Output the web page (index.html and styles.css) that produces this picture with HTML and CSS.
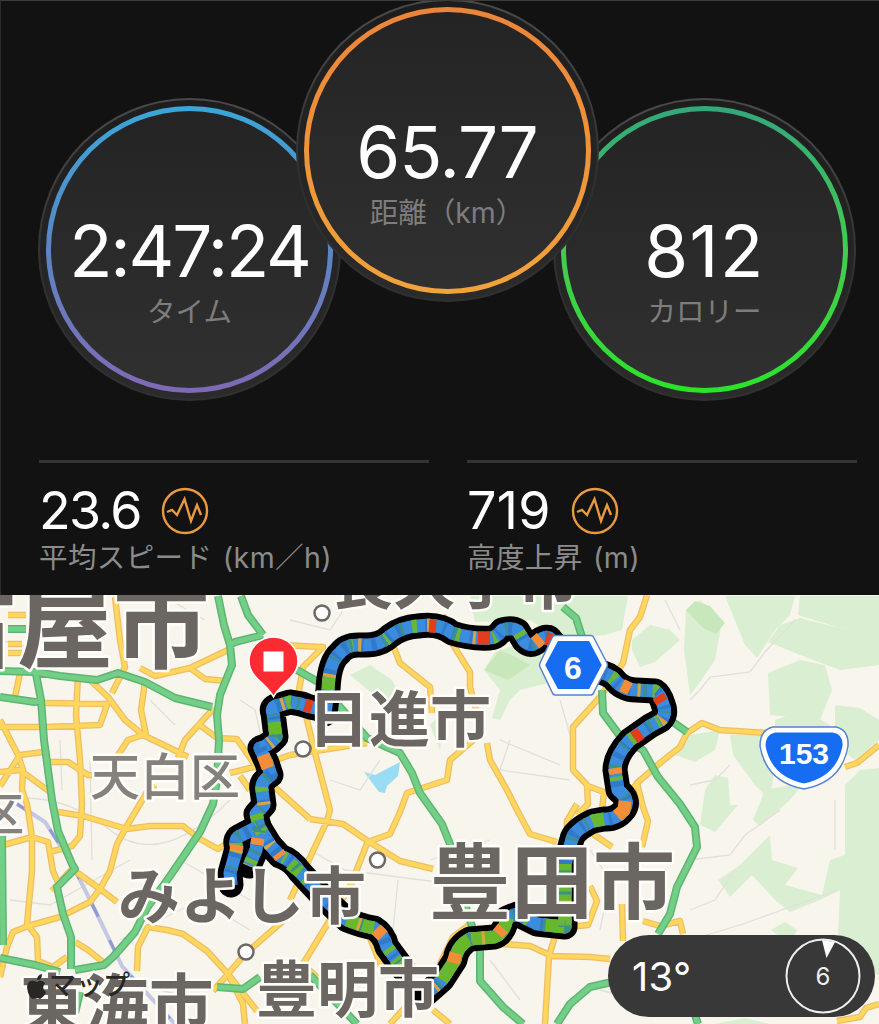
FILE: index.html
```
<!DOCTYPE html>
<html lang="ja">
<head>
    <meta charset="UTF-8">
    <meta name="viewport" content="width=device-width, initial-scale=1.0">
    <title>アクティビティ</title>
    <link rel="stylesheet" href="styles.css">
</head>
<body>
    <div class="activity">
        <!-- サマリー -->
        <section class="summary">
            <div class="dials">
                <div class="dial dial-time">
                    <div class="ring">
                        <span class="dial-value">2:47:24</span>
                        <span class="dial-label">タイム</span>
                    </div>
                </div>
                <div class="dial dial-distance">
                    <div class="ring">
                        <span class="dial-value">65.77</span>
                        <span class="dial-label">距離（km）</span>
                    </div>
                </div>
                <div class="dial dial-calories">
                    <div class="ring">
                        <span class="dial-value">812</span>
                        <span class="dial-label">カロリー</span>
                    </div>
                </div>
            </div>

            <div class="stats">
                <div class="stat">
                    <div class="stat-row">
                        <span class="stat-value speed">23.6</span>
                        <svg class="stat-icon" viewBox="0 0 48 48">
                            <circle cx="24" cy="24" r="22"/>
                            <path d="M6 25 L11 23 L16 28 L23.5 12 L30 34 L36 18 L40 28"/>
                        </svg>
                    </div>
                    <div class="stat-label">平均スピード (km／h)</div>
                </div>
                <div class="stat">
                    <div class="stat-row">
                        <span class="stat-value">719</span>
                        <svg class="stat-icon" viewBox="0 0 48 48">
                            <circle cx="24" cy="24" r="22"/>
                            <path d="M6 25 L11 23 L16 28 L23.5 12 L30 34 L36 18 L40 28"/>
                        </svg>
                    </div>
                    <div class="stat-label">高度上昇 (m)</div>
                </div>
            </div>
        </section>

        <!-- 地図 -->
        <section class="map">
            <svg class="map-canvas" viewBox="0 595 879 429">
                <defs>
                    <path id="yellow" d="M115 597 L120 640 L125 667 L112 693
                        M0 727 H45 L100 725 L108 702 M45 703 L108 704
                        M78 675 L76 715 L80 760 L82 804 L80 836 L72 846 L50 852
                        M90 680 L108 697 L125 720 L143 735 L178 752 L188 757
                        M145 682 L141 710 L146 735 M143 735 L128 740 L118 755
                        M140 668 L155 676 L190 668 L228 650 M190 668 L205 679 L226 681
                        M214 708 L185 740 L178 758 M197 723 L217 738 L237 739 L255 765 L270 783 L310 819
                        M230 773 L262 765 L290 755 M240 776 L250 790 M290 755 L367 743
                        M0 720 L18 755 L23 770 L22 790 L27 804 L32 837 L32 871 L27 924 L37 937 L38 961 L53 967 L67 957
                        M0 772 L20 770 L50 792 M0 786 L20 755 L43 752 M50 762 L68 762 L88 775 L108 776
                        M20 673 L15 697 M8 615 H26 M8 644 H22 M8 653 H22
                        M0 846 L32 837 L48 842 L53 871 L60 887
                        M0 977 L7 947 L13 932 L28 926 L60 917 L90 902 L100 889 L110 871 L117 844 L128 824 L147 792 L155 785
                        M58 812 L83 816 L127 829 L150 826 L183 826 L200 839 L218 849 L228 843
                        M52 891 L72 869 L100 889 L117 902 M75 942 L88 950 L103 962
                        M137 971 L138 947 L148 927 L167 930 L183 934 L207 951 L228 974 L243 1004 L245 1024
                        M283 921 L245 954 L228 974 L213 991 M228 974 L257 1011
                        M280 645 L323 647 L303 667 L299 690 L307 720 L315 753 L330 810 L327 821 L307 864 L290 900
                        M388 633 L400 663 L430 687 L432 713 M443 615 L450 640 L470 672 L470 687 L477 713
                        M477 737 L450 760 L447 780 L407 793 L400 812 L390 834 L368 842
                        M487 743 L490 760 L507 790 L517 810 L530 834 L557 842 M310 819 L343 824 L368 841 L400 861 L433 869
                        M368 841 L350 887 L303 964 L320 980 M577 804 L567 821 L567 838
                        M440 964 L453 937 L470 924 M503 944 L530 946 L552 956 L590 957 L610 959
                        M557 930 L549 956 L545 1024 M570 927 L588 925 L597 901 L590 886
                        M433 1010 L450 1024 M390 1024 L412 1000 M367 930 L383 971
                        M647 595 L640 617 L630 630 L623 663 L600 697 L573 727 L573 770 L587 785 L588 804 L577 815
                        M585 785 L604 792 L602 810 M687 733 L702 723 L720 730 L767 733 M845 767 L857 763 L879 745
                        M687 733 L680 747 L660 763 L637 783 L643 807 L648 821 L642 847 M637 783 L629 795
                        M593 834 L612 847 M622 904 L623 941 M643 921 L660 926 L680 921 L683 934 M837 1021 L860 1017 L866 1008 L879 1004"/>
                    <path id="green" d="M0 671 L35 672 L60 676 L97 680 L118 673 L145 682 L175 698 L212 707
                        M0 697 L35 702 L42 700 M36 674 L41 700 L44 740 L52 800 L58 831 L72 864 L75 869 L57 887 L63 914 L71 937 L71 969
                        M218 596 L224 625 L230 645 L232 665 L220 695 L217 715 L219 740 L217 780 L213 804 L200 832 L170 876 L147 908 L135 932 L113 957 L104 965 L75 970
                        M241 596 L248 615 L263 635 M263 635 L235 642 L229 646 M8 629 H26
                        M0 958 L35 965 L60 972 M2 835 L3 945
                        M563 607 L576 618 L583 640 M602 690 L603 713 L623 740 L643 750 L658 777 L680 804 L695 827 L697 847 L677 887 L670 914 L658 934
                        M670 720 L687 732 M297 670 L320 683 L340 707 L367 738 L400 753 L412 773 L420 793 L442 824 L450 844 L467 911 L480 951 L480 981 L503 1007 L523 1024
                        M557 1024 L570 1004 L590 987 L612 982 M217 987 L243 989 L260 977 M310 975 L357 1024 M80 992 L75 1013 M695 1015 L698 1024"/>
                    <path id="route-main" d="M325 714 L328 690 Q329 662 340 653 Q346 644 362 645 Q380 646 390 636 Q402 627 418 626 Q440 623 452 633 Q470 639 490 638 Q496 638 502 630 Q512 627 518 631 L524 641 Q531 648 538 641 Q548 634 551 640 L565 655 L590 671 Q604 671 613 678 Q622 690 636 690 L655 691 Q660 694 663 704 Q667 714 661 720 L650 726 L630 740 Q615 756 615 770 L618 790 Q631 800 624 810 Q616 820 604 819 L593 821 Q574 830 572 839 L565 864 V927 L537 924 L517 914 L507 918 Q504 934 494 937 L470 939 Q457 946 455 960 L442 980 L425 995"/>
                    <path id="route-west" d="M320 709 L310 707 Q300 703 290 702 L280 705 Q270 706 273 713 L276 737 Q268 746 260 748 L267 763 L271 775 Q260 782 262 790 L264 805 L256 814 L259 827 L270 845 L280 856 Q292 860 300 872 L327 901 L347 920 Q362 926 374 928 Q384 934 387 947 L404 970"/>
                    <path id="route-spur" d="M259 826 L242 835 Q233 838 237 848 L230 873 L231 885 M259 830 L256 850 L249 866"/>
                </defs>

                <!-- 緑地・水域 -->
                <path class="park" d="M470 596 H628 L622 630 L605 635 L560 640 L530 620 L475 622 Z
                    M484 670 L495 652 L515 645 L545 650 L560 680 L520 690 L510 700 L500 720 L492 718 L500 690 Z
                    M350 675 L370 665 L392 680 L405 705 L380 700 Z M632 640 L650 625 L670 630 L680 640 L655 662 L640 667 L632 650 Z
                    M686 610 L700 600 L722 620 L715 660 L698 685 L690 695 L684 650 Z
                    M725 596 H795 L790 615 L775 630 L757 658 L745 645 Z M800 596 H879 V622 L840 628 L798 615 Z
                    M780 625 L800 618 L840 628 L879 622 V665 L840 670 L800 655 L768 642 Z
                    M768 673 L800 660 L825 665 L832 690 L820 720 L770 715 Z M775 720 L805 710 L830 725 L825 740 H775 Z
                    M835 705 L860 708 L879 720 V740 L855 760 L835 745 Z M675 755 L690 735 L720 730 L715 750 L695 762 Z
                    M730 735 L765 735 L775 765 L770 800 L755 785 L733 755 Z M705 790 L715 775 L728 778 L730 805 H738 L715 832 L700 825 Z
                    M765 790 L805 782 L790 800 L760 826 L753 820 Z M845 785 L860 770 L879 768 V975 L850 965 L838 935 L840 890 L820 900 L790 912 L775 900 L752 875 L730 897 L718 880 L740 865 L770 835 L772 860 L798 868 L785 885 L822 895 L830 860 L845 855 Z
                    M771 930 L785 922 L797 930 L790 945 Z M715 1024 L745 1018 L770 1024 Z M430 725 L445 710 L440 750 Z"/>
                <path class="park-deep" d="M686 610 L695 601 L710 606 L725 623 L716 634 L703 628 Z M484 670 L500 650 L512 655 L530 665 L508 680 Z"/>
                <path class="water" d="M364 772 L375 775 L400 762 L398 776 L387 786 L385 793 L379 792 Z"/>

                <!-- 細い道路 -->
                <path class="minor" d="M0 800 Q60 790 110 830 T230 800 M10 900 L50 905 L130 860 M90 760 L92 860 M0 640 L40 650 M150 620 L170 600 L205 620 M150 700 L175 725 M240 700 L255 710 L262 740
                    M290 620 L330 630 L350 600 M330 780 L360 790 L380 760 M310 850 L345 870 L460 885 M398 880 L390 960 M430 860 L490 840 M500 740 L560 765 M510 740 L500 770 L570 780 M560 700 L570 735
                    M690 700 L700 690 L710 677 L750 672 L765 652 L795 620 M665 600 L680 630 M690 860 L730 855 L745 835 L780 810 M835 800 L835 850 M690 910 L715 900 L735 870 M690 940 L740 925 L838 890 M590 850 L610 880 L600 930 M490 960 L520 1000 M600 990 L680 1010 M120 940 L200 900 L250 930 M160 990 L200 1000 M180 860 L250 900 M60 740 L62 790 M690 785 L715 780 L730 765"/>
                <path class="rail" d="M17 804 L45 822 L72 864 L95 910 L122 966 L175 1024"/>
                <path class="rail-dash" d="M17 804 L45 822 L72 864 L95 910 L122 966 L175 1024"/>

                <!-- 幹線道路 -->
                <use href="#yellow" class="road yellow-edge"/>
                <use href="#yellow" class="road yellow-fill"/>
                <use href="#green" class="road green-edge"/>
                <use href="#green" class="road green-fill"/>

                <!-- 走行ルート -->
                <g class="route">
                    <g class="route-edge"><use href="#route-main"/><use href="#route-west"/><use href="#route-spur"/></g>
                    <g class="route-blue"><use href="#route-main"/><use href="#route-west"/><use href="#route-spur"/></g>
                    <g class="route-deep"><use href="#route-main"/><use href="#route-west"/><use href="#route-spur"/></g>
                    <path class="seg green" d="M604 819 L593 821 M565 864 V927 L545 925 M507 918 Q504 934 494 937 L470 939 Q457 946 455 960 L442 980 M290 864 L300 872 M347 920 Q362 926 374 928 M395 959 L404 970 M274 722 L276 737 M328 690 L329 677 M256 814 L258 820"/>
                    <g class="route-green"><use href="#route-main"/><use href="#route-west"/><use href="#route-spur"/></g>
                    <g class="route-teal"><use href="#route-main"/><use href="#route-west"/><use href="#route-spur"/></g>
                    <g class="route-orange"><use href="#route-main"/><use href="#route-west"/><use href="#route-spur"/></g>
                    <path class="seg red" d="M429 626 L436 626.500 M478 638 L490 638 M546 638 L551 640 M658 696 L662 702 M641 733 L634 738 M305 705 L312 707"/>
                    <path class="seg orange" d="M535 643 L541 638 M622 685 L630 689 M615 768 L616 774 M263 755 L268 768 M503 928 L498 934 M456 953 L453 963 M376 929 L383 936 M625 801 L624 810 L617 816 M237 845 L236 850 M278 853 L281 857 M258 838 L257 845"/>
                </g>

                <!-- 駅 -->
                <g class="station">
                    <circle cx="322" cy="613" r="7.500"/>
                    <circle cx="303" cy="749" r="7.500"/>
                    <circle cx="377.500" cy="860" r="7.500"/>
                    <circle cx="246" cy="952" r="7.500"/>
                </g>

                <!-- 地名 -->
                <g class="place">
                    <text x="-80" y="660" font-size="96.500">古屋市</text>
                    <text x="331" y="604" font-size="62">長久手市</text>
                    <text x="308" y="742" font-size="61">日進市</text>
                    <text x="118" y="919" font-size="62">みよし市</text>
                    <text x="429" y="912" font-size="82">豊田市</text>
                    <text x="256" y="1012" font-size="61">豊明市</text>
                    <text x="20" y="1028" font-size="64.500">東海市</text>
                </g>
                <g class="place ward">
                    <text x="90" y="795" font-size="50">天白区</text>
                    <text x="-22" y="831" font-size="46">区</text>
                </g>

                <!-- 国道・県道 -->
                <path class="shield-line" d="M555 635.500 H591 Q593 635.500 594 638 L607 663 Q608 665 607 667 L594 692 Q593 695 591 695 H555 Q553 695 552 692 L540 667 Q539 665 540 663 L552 638 Q553 635.500 555 635.500 Z"/>
                <path class="shield" d="M557 639.500 H590 L603.500 665 L590 690.500 H557 L543.500 665 Z"/>
                <text class="shield-text" x="573" y="679" font-size="32">6</text>
                <path class="shield-line" d="M773 727 H836 Q849 730 848 746 Q842 782 804 789 Q766 782 760 746 Q760 730 773 727 Z"/>
                <path class="shield" d="M775 731 H833 Q845 733 844 746 Q838 778 804 785 Q770 778 764 746 Q764 733 775 731 Z"/>
                <text class="shield-text" x="804" y="764" font-size="30">153</text>

                <!-- ゴールピン -->
                <path class="pin" d="M273.500 697 C267 683 249 678 249 661 A24.500 24 0 0 1 298 661 C298 678 280 683 273.500 697 Z"/>
                <rect x="263.500" y="651.500" width="20" height="20" fill="#fff"/>

                <!-- マップ表記 -->
                <path class="logo" d="M42 974 Q37 975 37 980 Q42 980 42 974 M37 982 Q28 978 27 987 Q28 997 33 999 Q36 997 40 999 Q45 996 46 992 Q41 989 45 983 Q41 979 37 982 Z"/>
                <text class="credit" x="49" y="995" font-size="27">マップ</text>
            </svg>

            <div class="weather">
                <span class="temp">13°</span>
                <svg class="wind" viewBox="0 0 76 76">
                    <circle cx="38" cy="38" r="36.500"/>
                    <path d="M37 2 L50 4 L41.500 20 Z"/>
                    <text x="38" y="46.500">6</text>
                </svg>
            </div>
        </section>
    </div>
</body>
</html>
```
FILE: styles.css
```
* {
    margin: 0;
    padding: 0;
    box-sizing: border-box;
}

body {
    width: 879px;
    height: 1024px;
    overflow: hidden;
    background: #121212;
    color: #fff;
    font-family: Inter, "Noto Sans CJK JP", sans-serif;
}

.activity {
    display: flex;
    flex-direction: column;
    height: 1024px;
}

/* サマリー */
.summary {
    height: 595px;
    border-top: 1px solid #3a3b3b;
    border-left: 1px solid #2d2d2d;
    padding: 0 21px 0 37px;
    overflow: hidden;
}

.dials {
    display: flex;
    align-items: flex-end;
    height: 400px;
}

.dial {
    flex: none;
    width: 303px;
    height: 303px;
    padding: 6px;
    border-radius: 50%;
    border: 2px solid transparent;
    background: linear-gradient(#1d1d1e, #2b2b2c) padding-box, linear-gradient(#4c4949, #303031 60%) border-box;
}

.dial-distance {
    z-index: 1;
    align-self: flex-start;
    margin: -2px -45.5px 0;
}

.ring {
    display: flex;
    flex-direction: column;
    align-items: center;
    height: 287px;
    padding-top: 102px;
    border: 5px solid transparent;
    border-radius: 50%;
}

.dial-time .ring {
    background: linear-gradient(#242424, #303030) padding-box, linear-gradient(#3ba6d8, #5b86c4 50%, #8069b4) border-box;
}

.dial-distance .ring {
    background: linear-gradient(#242424, #303030) padding-box, linear-gradient(#ec8439, #f2a33a) border-box;
}

.dial-calories .ring {
    background: linear-gradient(#242424, #303030) padding-box, linear-gradient(#34a77c, #45cb50 50%, #2be32a) border-box;
}

.dial-value {
    font-size: 71px;
    line-height: 76px;
    letter-spacing: -1px;
    white-space: nowrap;
}

.dial-time .dial-value {
    letter-spacing: -2.2px;
}

.dial-calories .dial-value {
    letter-spacing: 1.5px;
}

.dial-label {
    margin-top: 2px;
    font-size: 28.5px;
    line-height: 42px;
    color: #7d7d7d;
    white-space: nowrap;
}

/* 平均スピード・高度上昇 */
.stats {
    display: grid;
    grid-template-columns: 390px 390px;
    gap: 38px;
    margin: 59px 0 0 1px;
}

.stat {
    border-top: 3px solid #343434;
    padding-top: 22px;
}

.stat-row {
    display: flex;
    align-items: center;
    gap: 20px;
    height: 52px;
}

.stat-value {
    font-size: 52px;
    line-height: 52px;
    letter-spacing: 0.3px;
}

.stat-value.speed {
    letter-spacing: -1.7px;
}

.stat-icon {
    width: 48px;
    height: 48px;
    fill: none;
    stroke: #e99a3e;
    stroke-width: 2.4;
}

.stat-label {
    font-size: 28.5px;
    line-height: 42px;
    letter-spacing: 0.4px;
    word-spacing: 2px;
    color: #8b8b8b;
    white-space: nowrap;
}

/* 地図 */
.map {
    position: relative;
    height: 429px;
    background: #f8f5ed;
}

.map-canvas {
    display: block;
    width: 879px;
    height: 429px;
    font-family: "Noto Sans CJK JP", sans-serif;
}

.park { fill: #daefd1; }
.park-deep { fill: #c8e7ba; }
.water { fill: #9bdcf5; }

.minor {
    fill: none;
    stroke: #e2dfdb;
    stroke-width: 1.3;
}

.rail {
    fill: none;
    stroke: #c4c8e4;
    stroke-width: 4;
}

.rail-dash {
    fill: none;
    stroke: #8e9ad0;
    stroke-width: 3;
    stroke-dasharray: 16 26;
}

.road {
    fill: none;
    stroke-linejoin: round;
}

.yellow-edge { stroke: #efbd67; stroke-width: 6.5; }
.yellow-fill { stroke: #ffd75d; stroke-width: 4; }
.green-edge { stroke: #5cb574; stroke-width: 8; }
.green-fill { stroke: #74cf86; stroke-width: 5; }

/* 走行ルート */
.route {
    fill: none;
    stroke-linejoin: round;
}

.route-edge { stroke: #000; stroke-width: 25; stroke-linecap: round; }
.route-blue { stroke: #3b8cdc; stroke-width: 13; }
.route-deep { stroke: #307ac9; stroke-width: 13; stroke-dasharray: 3 8 5 13; }
.route-green { stroke: #69b53d; stroke-width: 13; stroke-dasharray: 3 27 5 41 4 33; }
.route-teal { stroke: #3c8f8b; stroke-width: 13; stroke-dasharray: 2 19 3 31; }
.route-orange { stroke: #d7a642; stroke-width: 13; stroke-dasharray: 0 37 3 45 3 33; }
.seg { stroke-width: 13; }
.seg.green { stroke: #67b82b; }
.seg.red { stroke: #e43d1d; }
.seg.orange { stroke: #f48d3a; }

.station {
    fill: #fff;
    stroke: #6b6865;
    stroke-width: 2.5;
}

.place {
    font-weight: 700;
    fill: #6b6661;
    stroke: #fffefa;
    stroke-width: 5;
    stroke-linejoin: round;
    paint-order: stroke;
}

.ward {
    font-weight: 500;
    fill: #85817d;
}

.shield {
    fill: #176df2;
    stroke: #fff;
    stroke-width: 3;
    stroke-linejoin: round;
}

.shield-line {
    fill: #fff;
    stroke: #5682cf;
    stroke-width: 1.5;
    stroke-linejoin: round;
}

.shield-text {
    fill: #fff;
    font-family: "Liberation Sans", sans-serif;
    font-weight: 700;
    text-anchor: middle;
}

.pin {
    fill: #fc2a31;
    stroke: #fff;
    stroke-width: 1.5;
}

.logo {
    fill: #282725;
}

.credit {
    fill: #282725;
    font-weight: 500;
}

/* 気温と風 */
.weather {
    position: absolute;
    right: 4px;
    bottom: 7px;
    display: flex;
    align-items: center;
    justify-content: space-between;
    width: 267px;
    height: 82px;
    padding: 0 14px 0 24px;
    border-radius: 41px;
    background: #383838;
}

.temp {
    font-size: 40px;
    letter-spacing: 0.3px;
}

.wind {
    width: 76px;
    height: 76px;
}

.wind circle {
    fill: none;
    stroke: #eee;
    stroke-width: 2;
}

.wind path {
    fill: #fff;
}

.wind text {
    fill: #eee;
    font-size: 24px;
    text-anchor: middle;
}
```
